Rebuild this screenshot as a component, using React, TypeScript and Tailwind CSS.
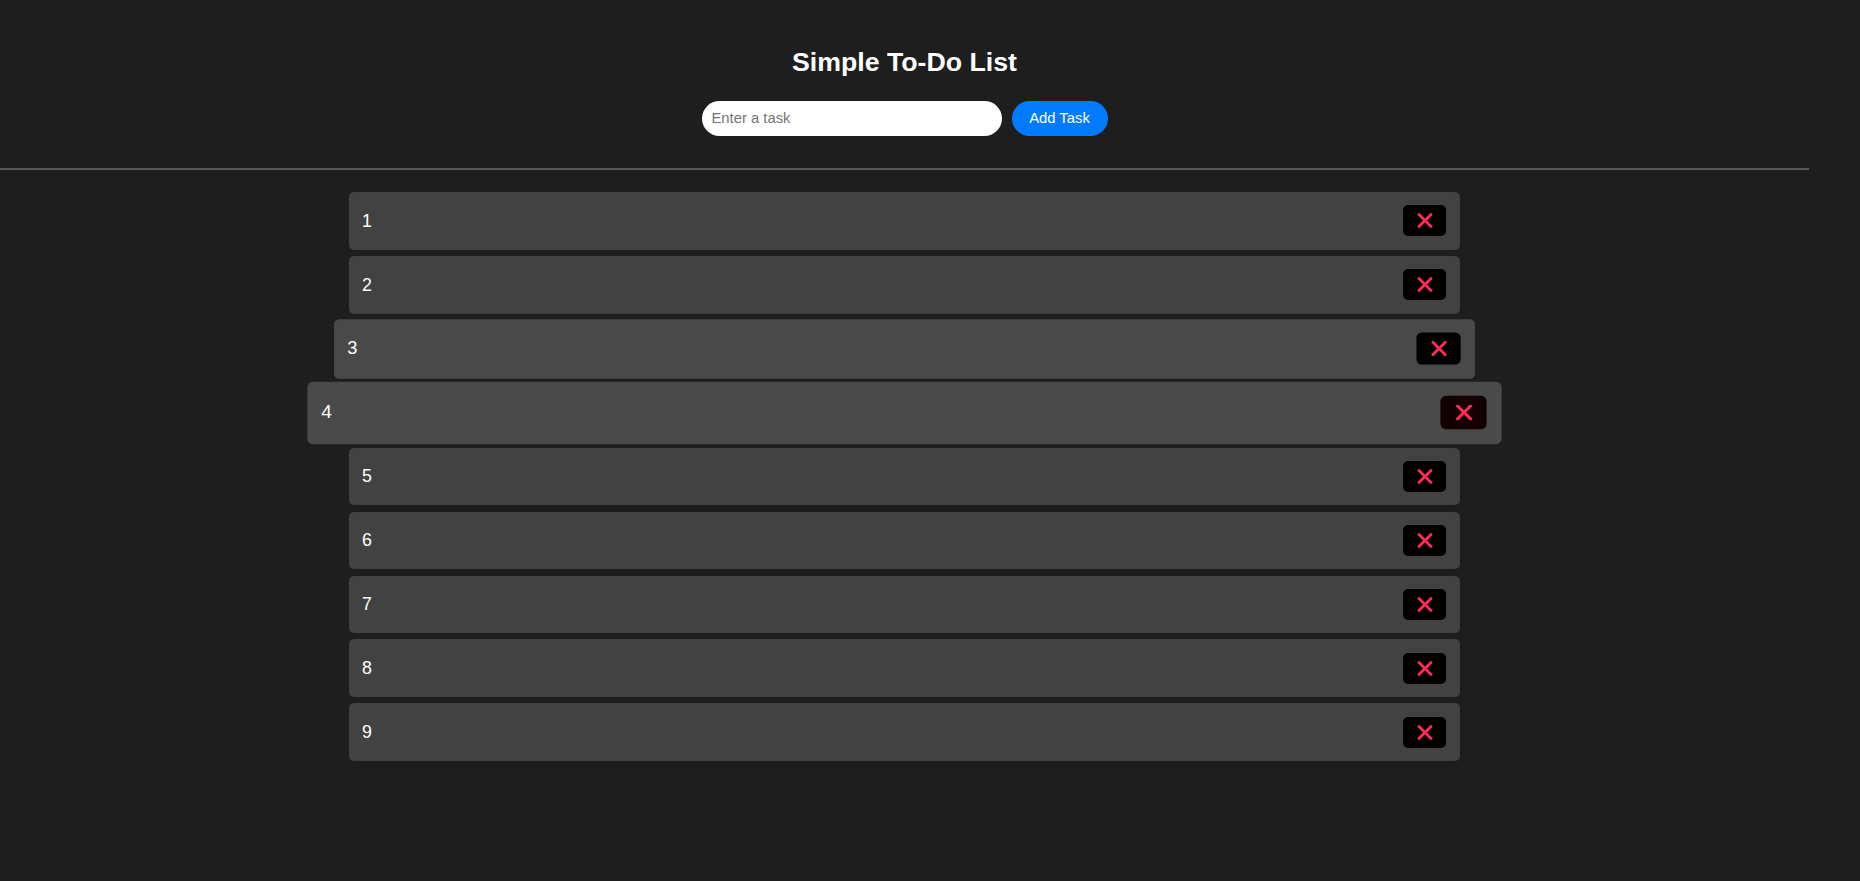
import { useState } from "react";

type Task = { id: number; text: string };

const initial: Task[] = Array.from({ length: 9 }, (_, i) => ({ id: i + 1, text: String(i + 1) }));

// Two rows caught mid hover-transition in the reference.
const rowState: Record<number, string> = {
  3: "scale-[1.027] bg-[#494949]",
  4: "scale-[1.075] bg-[#4a4a4a]",
};

function DeleteIcon() {
  return (
    <svg width="16" height="15" viewBox="0 0 16 15" aria-hidden>
      <path d="M2 1.5 14 13.5M14 1.5 2 13.5" stroke="#ff2d55" strokeWidth="2.8" strokeLinecap="round" fill="none" />
    </svg>
  );
}

export default function App() {
  const [tasks, setTasks] = useState<Task[]>(initial);
  const [draft, setDraft] = useState("");

  const add = () => {
    if (!draft.trim()) return;
    setTasks((t) => [...t, { id: Date.now(), text: draft.trim() }]);
    setDraft("");
  };

  return (
    <div className="min-h-screen w-full bg-[#1e1e1e] font-['Liberation_Sans',Arial,sans-serif] text-white">
      <div className="w-[1809px] flex flex-col items-center pt-[41.5px]">
        <h1 className="text-[26.7px] font-bold leading-normal">Simple To-Do List</h1>

        <div className="mt-[19px] flex items-center gap-[10px]">
          <input
            value={draft}
            onChange={(e) => setDraft(e.target.value)}
            placeholder="Enter a task"
            className="h-[35px] w-[300px] rounded-full bg-white pl-[10px] text-[14.8px] text-black outline-none placeholder:text-[#757575]"
          />
          <button
            onClick={add}
            className="h-[35px] w-[96px] rounded-full bg-[#007bff] text-[14.8px] text-white"
          >
            Add Task
          </button>
        </div>

        <div className="mt-[32px] h-[2px] w-full bg-[#595959]" />

        <ul className="mt-[22.7px] flex w-[1111px] flex-col gap-[6.4px]">
          {tasks.map((t) => (
            <li
              key={t.id}
              className={`flex h-[57.5px] items-center justify-between rounded-[5px] pl-[13px] pr-[14px] text-[17.8px] ${
                rowState[t.id] ?? "bg-[#424242]"
              }`}
            >
              <span>{t.text}</span>
              <button
                onClick={() => setTasks((all) => all.filter((x) => x.id !== t.id))}
                className={`flex h-[31px] w-[43px] items-center justify-center rounded-[5px] ${
                  t.id === 4 ? "bg-[#140003]" : "bg-black"
                }`}
              >
                <DeleteIcon />
              </button>
            </li>
          ))}
        </ul>
      </div>
    </div>
  );
}
